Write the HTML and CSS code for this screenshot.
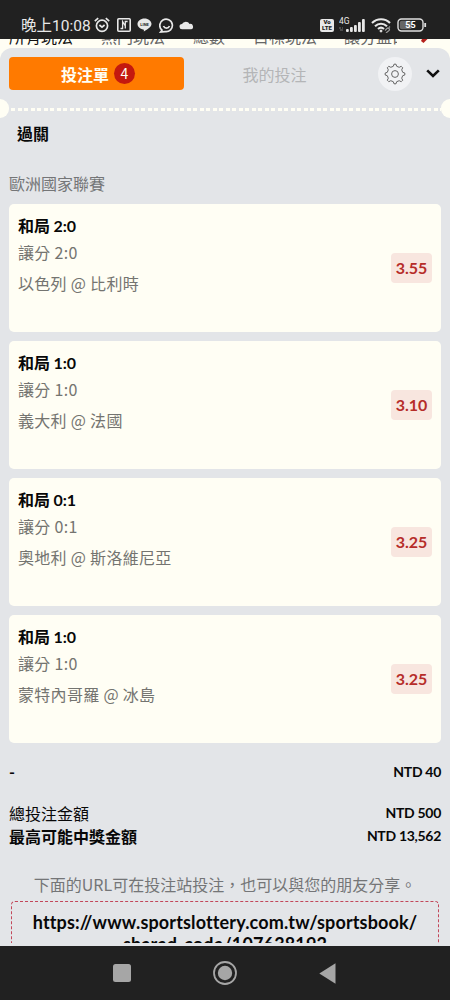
FILE: index.html
```html
<!DOCTYPE html>
<html lang="zh-Hant">
<head>
    <meta charset="UTF-8">
    <meta name="viewport" content="width=device-width, initial-scale=1.0">
    <title>投注單</title>
    <link rel="stylesheet" href="styles.css">
</head>
<body>
    <div class="status-bar">
        <div class="status-left">
            <span class="clock">晚上10:08</span>
            <svg width="16" height="16" viewBox="0 0 16 16" fill="none" stroke="#e8e8e8" stroke-width="1.7">
                <circle cx="8" cy="8.8" r="5.6"/>
                <path d="M.8 4.200l3.400-3M15.200 4.200l-3.400-3M5.400 8l2.600 2.200L10.600 8"/>
            </svg>
            <svg width="14" height="14" viewBox="0 0 14 14" fill="none" stroke="#e8e8e8" stroke-width="1.6">
                <rect x=".8" y=".8" width="12.4" height="12.4" rx="1"/>
                <path d="M3.500 10.500h2.100V3.500L8.300 8M10.600 3.500H8.300v7" stroke-width="1.3"/>
            </svg>
            <svg width="15" height="14" viewBox="0 0 15 14">
                <path d="M7.500.5C3.600.5.5 3 .5 6.100c0 2.800 2.500 5 5.800 5.500.8.2.6.8.5 1.900 2-.9 7.700-4.200 7.700-7.400C14.500 3 11.400.5 7.500.5z" fill="#e8e8e8"/>
                <text class="line-text" x="7.500" y="7.800" text-anchor="middle">LINE</text>
            </svg>
            <svg width="15" height="15" viewBox="0 0 15 15" fill="none" stroke="#e8e8e8" stroke-width="1.700">
                <path d="M3 12.200A6.300 6.300 0 1 1 6 13.600L1.600 14z"/>
                <path d="M4.500 8c1.200 2.800 4.800 2.800 6 0"/>
            </svg>
            <svg class="cloud" width="15" height="10" viewBox="0 0 15 10">
                <path d="M3.200 9.300a2.600 2.600 0 0 1-.2-5.200A4.200 4.200 0 0 1 10.600 4a2.700 2.700 0 1 1 1.400 5.300z" fill="#e8e8e8"/>
            </svg>
        </div>
        <div class="status-right">
            <div class="volte"><span>Vo</span><span>LTE</span></div>
            <svg class="signal" width="28" height="16" viewBox="0 0 28 16" fill="#e8e8e8">
                <text class="net-text" x="0" y="7">4G</text>
                <path d="M0 11h2M4 11h-1M1 13h3" stroke="#777" stroke-width="1"/>
                <rect x="7" y="12" width="2.800" height="3" rx="1"/>
                <rect x="11" y="10" width="2.800" height="5" rx="1"/>
                <rect x="15" y="8" width="2.800" height="7" rx="1"/>
                <rect x="19" y="5" width="2.800" height="10" rx="1"/>
                <rect x="23" y="2" width="2.800" height="13" rx="1"/>
            </svg>
            <svg class="wifi" width="21" height="15" viewBox="0 0 21 15" fill="none" stroke="#e8e8e8" stroke-width="2.200">
                <path d="M1 5c5.200-5 13-5 18 0M4 8.200c3.500-3.300 8.500-3.300 12 0M7 11c2-1.700 4-1.700 6 0"/>
                <circle cx="10" cy="13" r="1" fill="#e8e8e8" stroke-width="1"/>
                <path d="M14 12.500l2-2a1.400 1.400 0 0 1 2 2l-3 2.500M18 9.500l1-1" stroke="#999" stroke-width="1.200"/>
            </svg>
            <svg class="battery" width="30" height="14" viewBox="0 0 30 14">
                <rect x="1" y="1" width="25" height="12" rx="3.500" fill="none" stroke="#e0e0e0" stroke-width="1.400"/>
                <rect x="2.800" y="2.800" width="12" height="8.400" rx="2" fill="#666"/>
                <path d="M28.200 5v4" stroke="#e0e0e0" stroke-width="1.800"/>
                <text class="battery-text" x="13.500" y="10.400" text-anchor="middle">55</text>
            </svg>
        </div>
    </div>

    <!-- market tabs, mostly hidden under the status bar -->
    <div class="markets">
        <span class="active">所有玩法</span>
        <span>熱門玩法</span>
        <span>總數</span>
        <span>目標玩法</span>
        <span class="last">讓分盤口</span>
        <svg width="8" height="6" viewBox="0 0 8 6"><path d="M2 0h5.500L3.500 4 1 2z" fill="#b4201c"/></svg>
    </div>

    <div class="sheet">
        <div class="tabs">
            <div class="tab tab-active">投注單<span class="count">4</span></div>
            <div class="tab">我的投注</div>
            <div class="gear">
                <svg width="22" height="22" viewBox="0 0 22 22" fill="none" stroke="#666" stroke-width="1" stroke-linejoin="round">
                    <path d="M9.300 3.300 10 1.200h2l.7 2.100 2.500 1 2-1 1.500 1.500-1 2 1 2.500 2.100.7v2l-2.100.7-1 2.500 1 2-1.500 1.500-2-1-2.500 1-.7 2.100h-2l-.7-2.100-2.500-1-2 1-1.500-1.500 1-2-1-2.500-2.100-.7v-2l2.100-.7 1-2.500-1-2 1.500-1.500 2 1z"/>
                    <circle cx="11" cy="11" r="3.400"/>
                </svg>
            </div>
            <svg class="chevron" width="14" height="9" viewBox="0 0 14 9" fill="none" stroke="#111" stroke-width="2.600">
                <path d="M1.200 1.400 7 7l5.800-5.600"/>
            </svg>
        </div>
        <div class="tear">
            <div class="notch notch-left"></div>
            <div class="dashes"></div>
            <div class="notch notch-right"></div>
        </div>
        <h2 class="type">過關</h2>
        <div class="league">歐洲國家聯賽</div>

        <div class="bets">
            <div class="bet">
                <div class="bet-info">
                    <div class="pick">和局 2:0</div>
                    <div class="market">讓分 2:0</div>
                    <div class="match">以色列 @ 比利時</div>
                </div>
                <div class="odds">3.55</div>
            </div>
            <div class="bet">
                <div class="bet-info">
                    <div class="pick">和局 1:0</div>
                    <div class="market">讓分 1:0</div>
                    <div class="match">義大利 @ 法國</div>
                </div>
                <div class="odds">3.10</div>
            </div>
            <div class="bet">
                <div class="bet-info">
                    <div class="pick">和局 0:1</div>
                    <div class="market">讓分 0:1</div>
                    <div class="match">奧地利 @ 斯洛維尼亞</div>
                </div>
                <div class="odds">3.25</div>
            </div>
            <div class="bet">
                <div class="bet-info">
                    <div class="pick">和局 1:0</div>
                    <div class="market">讓分 1:0</div>
                    <div class="match">蒙特內哥羅 @ 冰島</div>
                </div>
                <div class="odds">3.25</div>
            </div>
        </div>

        <div class="totals">
            <div class="row row-first"><b>-</b><span class="amount">NTD 40</span></div>
            <div class="row"><span>總投注金額</span><span class="amount">NTD 500</span></div>
            <div class="row"><b>最高可能中獎金額</b><span class="amount">NTD 13,562</span></div>
        </div>

        <p class="share-text">下面的URL可在投注站投注，也可以與您的朋友分享。</p>
        <div class="share-url">https://www.sportslottery.com.tw/sportsbook/<br>shared-code/107638192</div>
    </div>

    <div class="nav-bar">
        <svg width="18" height="18" viewBox="0 0 18 18"><rect width="18" height="18" rx="2.500" fill="#a6a6a6"/></svg>
        <svg width="24" height="24" viewBox="0 0 24 24">
            <circle cx="12" cy="12" r="11" fill="none" stroke="#a6a6a6" stroke-width="1.800"/>
            <circle cx="12" cy="12" r="7.200" fill="#a6a6a6"/>
        </svg>
        <svg width="17" height="21" viewBox="0 0 17 21"><path d="M16.500.3v20.400L.3 10.500z" fill="#a6a6a6"/></svg>
    </div>
</body>
</html>
```

FILE: styles.css
```css
* {
    box-sizing: border-box;
}

body {
    margin: 0;
    width: 450px;
    height: 1000px;
    overflow: hidden;
    display: flex;
    flex-direction: column;
    background-color: #fffef4;
    font-family: Lato, "Noto Sans CJK TC", sans-serif;
    font-size: 16px;
    color: #080808;
}

svg {
    flex-shrink: 0;
}

/* Phone status bar */
.status-bar {
    height: 39px;
    flex-shrink: 0;
    background-color: #212121;
    color: #e8e8e8;
    display: flex;
    justify-content: space-between;
    padding: 11px 23px 0 21px;
}

.status-left,
.status-right {
    display: flex;
    align-items: center;
    height: 28px;
}

.status-left {
    gap: 6.5px;
}

.clock {
    font-family: Roboto, "Noto Sans CJK TC", sans-serif;
    font-size: 15.5px;
    line-height: 24px;
    padding-top: 2px;
    margin-right: -3px;
    white-space: nowrap;
}

.cloud {
    margin-left: -1px;
}

.line-text {
    font: bold 4px Roboto, sans-serif;
    fill: #212121;
}

.volte {
    width: 14px;
    height: 13px;
    border-radius: 2px;
    background-color: #e8e8e8;
    color: #212121;
    font: 900 6px/6px Roboto, sans-serif;
    display: flex;
    flex-direction: column;
    align-items: center;
    margin-right: 5px;
}

.signal {
    margin-right: 4px;
}

.net-text {
    font: 8.5px Roboto, sans-serif;
}

.wifi {
    margin-right: 5px;
}

.battery-text {
    font: bold 9px Roboto, sans-serif;
    fill: #fff;
}

/* Market tabs */
.markets {
    height: 9px;
    flex-shrink: 0;
    overflow: hidden;
    display: flex;
    align-items: flex-end;
    padding-left: 9px;
    color: #666;
    line-height: 20px;
    white-space: nowrap;
}

.markets span {
    margin-right: 28px;
    margin-bottom: 1px;
}

.markets .active {
    color: #111;
}

.markets .last {
    width: 53px;
    overflow: hidden;
    margin-left: -1px;
    margin-right: 23px;
}

.markets svg {
    margin-bottom: 3px;
}

/* Bet slip */
.sheet {
    height: 898px;
    flex-shrink: 0;
    overflow: hidden;
    background-color: #e3e5e8;
    border-radius: 12px 12px 0 0;
}

.tabs {
    display: flex;
    align-items: center;
    height: 51px;
    padding: 0 10px 0 9px;
}

.tab {
    width: 175px;
    height: 33px;
    display: flex;
    align-items: center;
    justify-content: center;
    color: #b4b5b7;
    margin-left: 3px;
}

.tab-active {
    background-color: #ff7a00;
    border-radius: 4px;
    color: #fffef4;
    font-weight: bold;
    margin-left: 0;
    padding-left: 3px;
}

.count {
    width: 21px;
    height: 21px;
    border-radius: 50%;
    background-color: #c4190f;
    font-family: "Noto Sans CJK TC", sans-serif;
    font-size: 14px;
    font-weight: normal;
    line-height: 20px;
    text-align: center;
    margin-left: 5px;
}

.gear {
    width: 34px;
    height: 34px;
    border-radius: 50%;
    background-color: #f1f2f4;
    display: flex;
    align-items: center;
    justify-content: center;
    margin-left: 16px;
}

.chevron {
    margin-left: 14px;
}

.tear {
    display: flex;
    align-items: center;
    height: 19px;
}

.notch {
    width: 9px;
    height: 19px;
    background-color: #fffef4;
}

.notch-left {
    border-radius: 0 10px 10px 0;
}

.notch-right {
    border-radius: 10px 0 0 10px;
}

.dashes {
    flex: 1;
    height: 3px;
    margin-top: 1px;
    background: repeating-linear-gradient(90deg, transparent 0 2.5px, #fffef4 2.5px 6.5px);
}

.type {
    margin: 4px 0 0 17px;
    font-size: 16px;
    line-height: 24px;
}

.league {
    margin: 26px 9px 0;
    line-height: 24px;
    color: #747577;
}

.bets {
    display: flex;
    flex-direction: column;
    gap: 9px;
    padding: 8px 9px 0;
}

.bet {
    height: 128px;
    background-color: #fffef4;
    border-radius: 5px;
    display: flex;
    justify-content: space-between;
    align-items: center;
    padding: 0 9px;
}

.bet-info {
    align-self: flex-start;
    padding-top: 10px;
}

.pick {
    font-weight: bold;
    line-height: 24px;
    letter-spacing: -.1px;
}

.market,
.match {
    font-family: "Noto Sans CJK TC", sans-serif;
    line-height: 24px;
    letter-spacing: .3px;
    color: #747470;
}

.market {
    margin-top: 2px;
}

.match {
    margin-top: 7px;
}

.odds {
    width: 41px;
    height: 30px;
    border-radius: 4px;
    background-color: #f8e6df;
    color: #b62d29;
    font-weight: bold;
    line-height: 30px;
    text-align: center;
}

/* Totals */
.totals {
    padding: 17px 9px 0;
}

.row {
    display: flex;
    justify-content: space-between;
    align-items: center;
    height: 23px;
}

.row-first {
    margin-bottom: 18px;
}

.amount {
    font-size: 14px;
    font-weight: bold;
    letter-spacing: -.3px;
}

.share-text {
    margin: 25px 0 0;
    font-family: "Noto Sans CJK TC", sans-serif;
    line-height: 24px;
    text-align: center;
    color: #747577;
}

/* lower part is scrolled out of view */
.share-url {
    margin: 5px 11px 0;
    padding-top: 9px;
    height: 42px;
    overflow: hidden;
    border: 1px dashed #c2475a;
    border-bottom: none;
    border-radius: 4px 4px 0 0;
    font-size: 18px;
    font-weight: bold;
    font-variant-ligatures: none;
    line-height: 22px;
    letter-spacing: .14px;
    text-align: center;
}

/* Phone navigation bar */
.nav-bar {
    flex: 1;
    background-color: #212121;
    display: flex;
    align-items: center;
    justify-content: space-between;
    padding: 0 114px 0 113px;
}
```
